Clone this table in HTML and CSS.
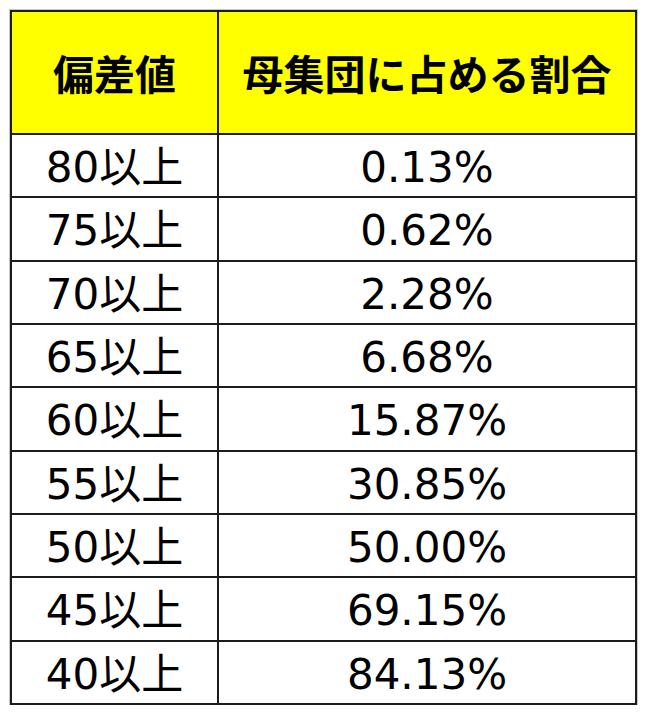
FILE: index.html
```html
<!DOCTYPE html>
<html lang="ja">
<head>
<meta charset="utf-8">
<link rel="stylesheet" href="styles.css">
</head>
<body>
<div class="page">
  <div class="table">
    <div class="cell head">偏差値</div>
    <div class="cell head">母集団に占める割合</div>
    <div class="cell">80以上</div><div class="cell">0.13%</div>
    <div class="cell">75以上</div><div class="cell">0.62%</div>
    <div class="cell">70以上</div><div class="cell">2.28%</div>
    <div class="cell">65以上</div><div class="cell">6.68%</div>
    <div class="cell">60以上</div><div class="cell">15.87%</div>
    <div class="cell">55以上</div><div class="cell">30.85%</div>
    <div class="cell">50以上</div><div class="cell">50.00%</div>
    <div class="cell">45以上</div><div class="cell">69.15%</div>
    <div class="cell">40以上</div><div class="cell">84.13%</div>
  </div>
</div>
</body>
</html>
```
FILE: styles.css
```css
html, body {
  margin: 0;
  padding: 0;
  background: #ffffff;
}
.page {
  padding: 10px 0 0 10px;
}
.table {
  display: grid;
  grid-template-columns: 205px 416px;
  grid-template-rows: 121px repeat(9, 61.33px);
  gap: 2px;
  padding: 2px;
  width: max-content;
  background: #1c1c1c;
  box-shadow: 0 0 0 1px #c8c8c8;
}
.cell {
  background: #ffffff;
  display: flex;
  align-items: center;
  justify-content: center;
  font-family: "DejaVu Sans", "Noto Sans CJK JP", sans-serif;
  font-size: 42px;
  line-height: 1;
  color: #000000;
  padding-top: 5px;
  box-sizing: border-box;
}
.cell.head {
  background: #ffff00;
  font-family: "Noto Sans CJK JP", sans-serif;
  font-weight: 700;
  font-size: 41px;
  padding-top: 0;
}
```
